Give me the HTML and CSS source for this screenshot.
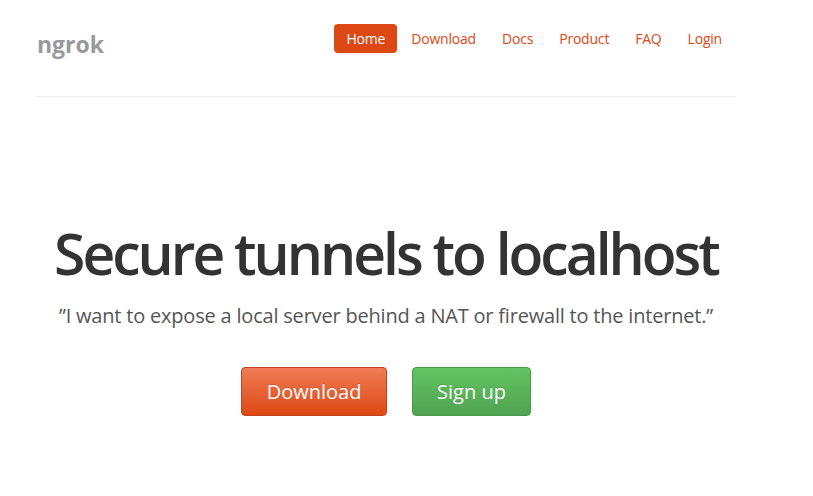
FILE: index.html
```html
<!DOCTYPE html>
<html>
<head>
<meta charset="utf-8">
<link rel="stylesheet" href="styles.css">
</head>
<body>
<div class="container">
  <header class="masthead">
    <div class="brand">ngrok</div>
    <nav class="nav">
      <a class="active" href="#">Home</a>
      <a href="#">Download</a>
      <a href="#">Docs</a>
      <a href="#">Product</a>
      <a href="#">FAQ</a>
      <a href="#">Login</a>
    </nav>
  </header>
  <hr class="rule">
  <section class="hero">
    <h1>Secure tunnels to localhost</h1>
    <p class="lead">”I want to expose a local server behind a NAT or firewall to the internet.”</p>
    <div class="actions">
      <a class="btn btn-orange" href="#">Download</a>
      <a class="btn btn-green" href="#">Sign up</a>
    </div>
  </section>
</div>
</body>
</html>
```
FILE: styles.css
```css
html, body {
  margin: 0;
  padding: 0;
  background: #fff;
}
body {
  font-family: "Open Sans", "Noto Sans", sans-serif;
  color: #333;
}
.container {
  width: 700px;
  margin-left: 36px;
}
.masthead {
  display: flex;
  align-items: flex-start;
  justify-content: space-between;
  padding-top: 24px;
  height: 48px;
}
.brand {
  font-size: 23px;
  font-weight: 700;
  color: #999;
  padding-top: 4px;
  padding-left: 1px;
}
.nav {
  display: flex;
  gap: 2px;
  margin-right: 2px;
}
.nav a {
  display: block;
  font-size: 14px;
  line-height: 29px;
  height: 29px;
  padding: 0 12px;
  color: #dd4814;
  text-decoration: none;
  border-radius: 4px;
  letter-spacing: -0.2px;
}
.nav a.active {
  background: #dd4814;
  color: #fff;
}
.rule {
  border: 0;
  border-top: 1px solid #eee;
  margin: 24px 0 0;
  height: 0;
}
.hero {
  display: flex;
  flex-direction: column;
  align-items: center;
  padding-top: 116px;
}
.hero h1 {
  margin: 0;
  font-size: 57px;
  font-weight: 600;
  letter-spacing: -3px;
  line-height: 80px;
  color: #333;
  white-space: nowrap;
}
.lead {
  margin: 10px 0 0;
  font-size: 20px;
  line-height: 26px;
  color: #555;
  letter-spacing: -0.2px;
  white-space: nowrap;
}
.actions {
  display: flex;
  gap: 25px;
  margin-top: 38px;
}
.btn {
  display: block;
  height: 47px;
  line-height: 47px;
  font-size: 20px;
  color: #fff;
  text-decoration: none;
  border-radius: 4px;
  text-align: center;
  text-shadow: 0 -1px 0 rgba(0,0,0,0.15);
}
.btn-orange {
  width: 144px;
  background: linear-gradient(#ef7c55, #dd4814);
  border: 1px solid #c4411a;
}
.btn-green {
  width: 117px;
  background: linear-gradient(#62c462, #51a351);
  border: 1px solid #4a994a;
}
```
